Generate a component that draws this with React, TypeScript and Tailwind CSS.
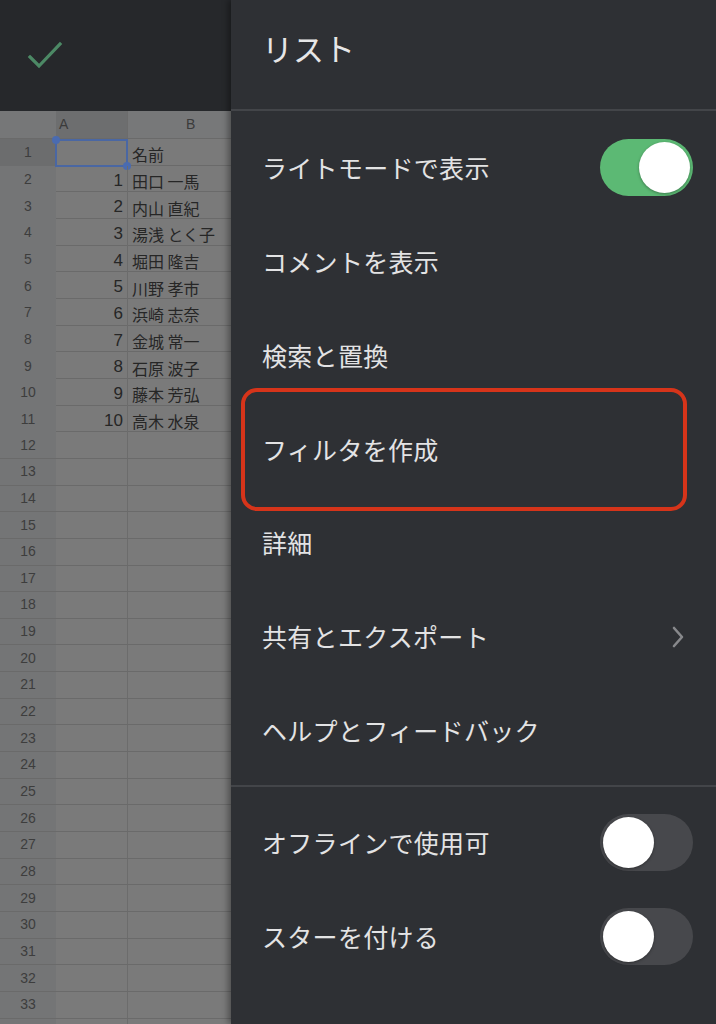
import React from "react";

const names = [
  "名前",
  "田口 一馬",
  "内山 直紀",
  "湯浅 とく子",
  "堀田 隆吉",
  "川野 孝市",
  "浜崎 志奈",
  "金城 常一",
  "石原 波子",
  "藤本 芳弘",
  "高木 水泉",
];

const jp = { fontFamily: '"Noto Sans CJK JP", "Noto Sans", sans-serif' };
const sans = { fontFamily: '"Liberation Sans", "Noto Sans CJK JP", sans-serif' };

function Toggle({ on }: { on: boolean }) {
  return (
    <div
      className={
        "flex h-[57px] w-[93px] items-center rounded-full px-[3px] " +
        (on ? "justify-end bg-[#5cb974]" : "justify-start bg-[#47484c]")
      }
    >
      <div className="h-[51px] w-[51px] rounded-full bg-white shadow-[0_1px_3px_rgba(0,0,0,0.35)]" />
    </div>
  );
}

function Item({
  label,
  right,
  children,
}: {
  label: string;
  right?: React.ReactNode;
  children?: React.ReactNode;
}) {
  return (
    <div className="relative flex h-[93.8px] items-center justify-between pl-[31px] pr-[23px]">
      <span className="text-[25px] tracking-[0.3px] text-[#e3e3e4]" style={jp}>
        {label}
      </span>
      {right}
      {children}
    </div>
  );
}

function Sheet() {
  const rows = Array.from({ length: 34 }, (_, i) => i + 1);
  return (
    <div className="flex flex-1 flex-col bg-[#7a7a7a]">
      <div className="grid h-[28px] grid-cols-[56px_72px_103px] border-b border-[#6a6a6a]" style={sans}>
        <div className="bg-[#767778]" />
        <div className="flex items-center border-r border-[#6c6c6c] bg-[#6d6e6f] pl-[3px] text-[14px] text-[#3b3b3b]">
          A
        </div>
        <div className="flex items-center bg-[#777879] pl-[58px] text-[14px] text-[#3b3b3b]">B</div>
      </div>
      {rows.map((r) => (
        <div
          key={r}
          className="grid h-[26.66px] shrink-0 grid-cols-[56px_72px_103px] border-b border-[#6a6a6a]"
        >
          <div
            className={
              "flex items-center justify-center text-[14px] text-[#3d3d3d] " +
              (r === 1 ? "bg-[#6c6d6e]" : "bg-[#747576]")
            }
            style={sans}
          >
            {r <= 33 ? r : ""}
          </div>
          <div className="relative flex items-center justify-end border-r border-[#6c6c6c] pr-[4px] pt-[2px] text-[17px] text-[#262626]" style={sans}>
            {r >= 2 && r <= 11 ? r - 1 : ""}
            {r === 1 && (
              <div className="absolute -bottom-[1px] -left-[1px] -right-[1px] top-0 border-2 border-[#4a67a3]">
                <div className="absolute -left-[5px] -top-[5px] h-[8px] w-[8px] rounded-full bg-[#4a6bb0]" />
                <div className="absolute -bottom-[5px] -right-[5px] h-[8px] w-[8px] rounded-full bg-[#4a6bb0]" />
              </div>
            )}
          </div>
          <div className="flex items-center whitespace-nowrap pl-[4px] pt-[3px] text-[16px] text-[#262626]" style={jp}>
            {r <= 11 ? names[r - 1] : ""}
          </div>
        </div>
      ))}
    </div>
  );
}

export default function App() {
  return (
    <div className="flex h-[1024px] w-[716px] overflow-hidden bg-[#2e3034]">
      <div className="flex w-[231px] shrink-0 flex-col overflow-hidden">
        <div className="flex h-[111px] shrink-0 items-start bg-[#26282b] pl-[27px] pt-[40px]">
          <svg width="36" height="30" viewBox="0 0 36 30" fill="none">
            <path d="M3 17 L12 26 L33 4" stroke="#4c8965" strokeWidth="3.2" strokeLinecap="square" />
          </svg>
        </div>
        <Sheet />
      </div>
      <div className="flex flex-1 flex-col bg-[#2e3034] shadow-[-3px_0_6px_rgba(0,0,0,0.35)]">
        <div className="flex h-[109px] items-center pb-[12px] pl-[31px]">
          <span className="text-[31px] text-[#e6e6e7]" style={jp}>
            リスト
          </span>
        </div>
        <div className="h-[2px] bg-[#434549]" />
        <div className="flex flex-col pb-[7px] pt-[10px]">
          <Item label="ライトモードで表示" right={<Toggle on />} />
          <Item label="コメントを表示" />
          <Item label="検索と置換" />
          <Item label="フィルタを作成">
            <div className="absolute -bottom-[15px] -top-[14px] left-[10px] right-[29px] rounded-[16px] border-4 border-[#d6341a]" />
          </Item>
          <Item label="詳細" />
          <Item
            label="共有とエクスポート"
            right={
              <svg width="16" height="24" viewBox="0 0 16 24" fill="none" className="mr-[7px]">
                <path d="M4 3 L12 12 L4 21" stroke="#88898c" strokeWidth="2.6" strokeLinecap="round" strokeLinejoin="round" />
              </svg>
            }
          />
          <Item label="ヘルプとフィードバック" />
        </div>
        <div className="h-[2px] bg-[#434549]" />
        <div className="flex flex-col pt-[9px]">
          <Item label="オフラインで使用可" right={<Toggle on={false} />} />
          <Item label="スターを付ける" right={<Toggle on={false} />} />
        </div>
      </div>
    </div>
  );
}
